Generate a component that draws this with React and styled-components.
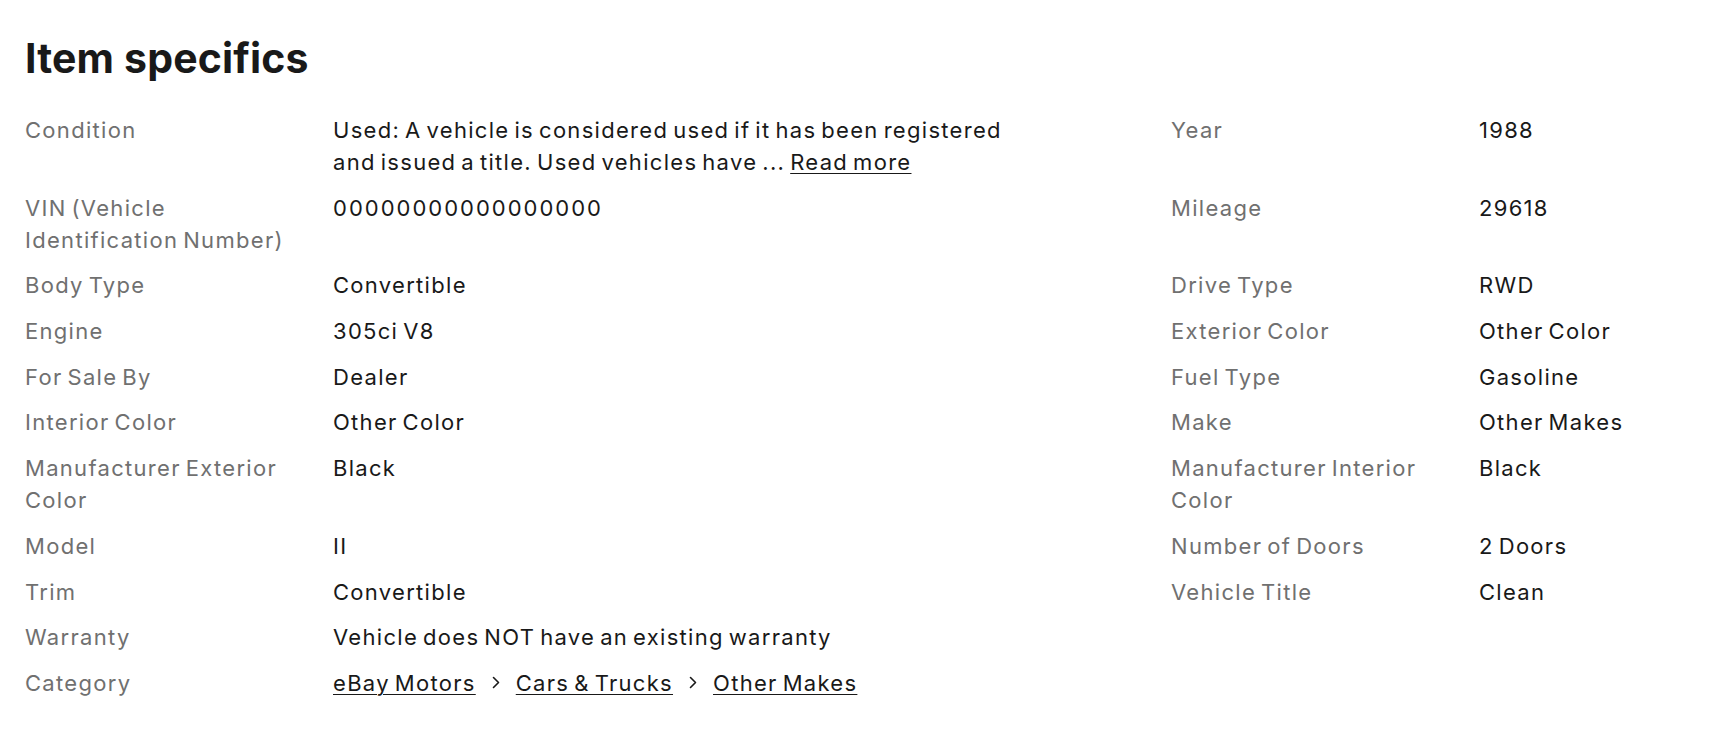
import React from 'react'
import styled, { createGlobalStyle } from 'styled-components'

const GlobalStyle = createGlobalStyle`
  body {
    margin: 0;
    background: #fff;
    font-family: Inter, "Liberation Sans", Arial, sans-serif;
    color: #191919;
  }
`

const Section = styled.section`
  padding: 34px 25px 0;
`
const Title = styled.h2`
  margin: 0 0 32px;
  font-size: 41px;
  line-height: 48px;
  font-weight: 700;
  letter-spacing: 0.15px;
  color: #191919;
`
const Specs = styled.div`
  display: flex;
  flex-direction: column;
  gap: 13.7px;
`
const Row = styled.div`
  display: grid;
  grid-template-columns: 1146px 1fr;
`
const Col = styled.div`
  display: grid;
  grid-template-columns: 308px 1fr;
  align-items: start;
`
const Label = styled.div`
  padding-right: 16px;
  font-size: 22px;
  line-height: 32px;
  letter-spacing: 1.3px;
  word-spacing: -2.5px;
  color: #707070;
`
const Value = styled.div`
  font-size: 22px;
  line-height: 32px;
  letter-spacing: ${props => (props.$digits ? '2px' : '1.3px')};
  word-spacing: -2.5px;
  color: #191919;
  max-width: ${props => (props.$narrow ? '700px' : 'none')};
`
const Link = styled.a`
  color: #191919;
  text-decoration: underline;
  text-underline-offset: 3px;
  text-decoration-thickness: 1px;
  cursor: pointer;
`
const Crumbs = styled.nav`
  display: flex;
  align-items: center;
  gap: 16px;
`
const Chevron = () => (
  <svg width="8" height="13" viewBox="0 0 8 13" fill="none">
    <path d="M1.5 1.5l5 5-5 5" stroke="#191919" strokeWidth="1.6" strokeLinecap="round" strokeLinejoin="round" />
  </svg>
)

const rows = [
  [
    {
      label: 'Condition',
      narrow: true,
      value: (
        <>
          Used: A vehicle is considered used if it has been registered and issued a title. Used
          vehicles have ... <Link>Read more</Link>
        </>
      ),
    },
    { label: 'Year', value: '1988' },
  ],
  [
    { label: 'VIN (Vehicle Identification Number)', value: '00000000000000000', digits: true },
    { label: 'Mileage', value: '29618' },
  ],
  [
    { label: 'Body Type', value: 'Convertible' },
    { label: 'Drive Type', value: 'RWD' },
  ],
  [
    { label: 'Engine', value: '305ci V8' },
    { label: 'Exterior Color', value: 'Other Color' },
  ],
  [
    { label: 'For Sale By', value: 'Dealer' },
    { label: 'Fuel Type', value: 'Gasoline' },
  ],
  [
    { label: 'Interior Color', value: 'Other Color' },
    { label: 'Make', value: 'Other Makes' },
  ],
  [
    { label: 'Manufacturer Exterior Color', value: 'Black' },
    { label: 'Manufacturer Interior Color', value: 'Black' },
  ],
  [
    { label: 'Model', value: 'II' },
    { label: 'Number of Doors', value: '2 Doors' },
  ],
  [
    { label: 'Trim', value: 'Convertible' },
    { label: 'Vehicle Title', value: 'Clean' },
  ],
  [{ label: 'Warranty', value: 'Vehicle does NOT have an existing warranty' }],
  [
    {
      label: 'Category',
      value: (
        <Crumbs>
          <Link>eBay Motors</Link>
          <Chevron />
          <Link>Cars &amp; Trucks</Link>
          <Chevron />
          <Link>Other Makes</Link>
        </Crumbs>
      ),
    },
  ],
]

const App = () => (
  <>
    <GlobalStyle />
    <Section>
      <Title>Item specifics</Title>
      <Specs>
        {rows.map((row, i) => (
          <Row key={i}>
            {row.map(item => (
              <Col key={item.label}>
                <Label>{item.label}</Label>
                <Value $narrow={item.narrow} $digits={item.digits}>
                  {item.value}
                </Value>
              </Col>
            ))}
          </Row>
        ))}
      </Specs>
    </Section>
  </>
)

export default App
